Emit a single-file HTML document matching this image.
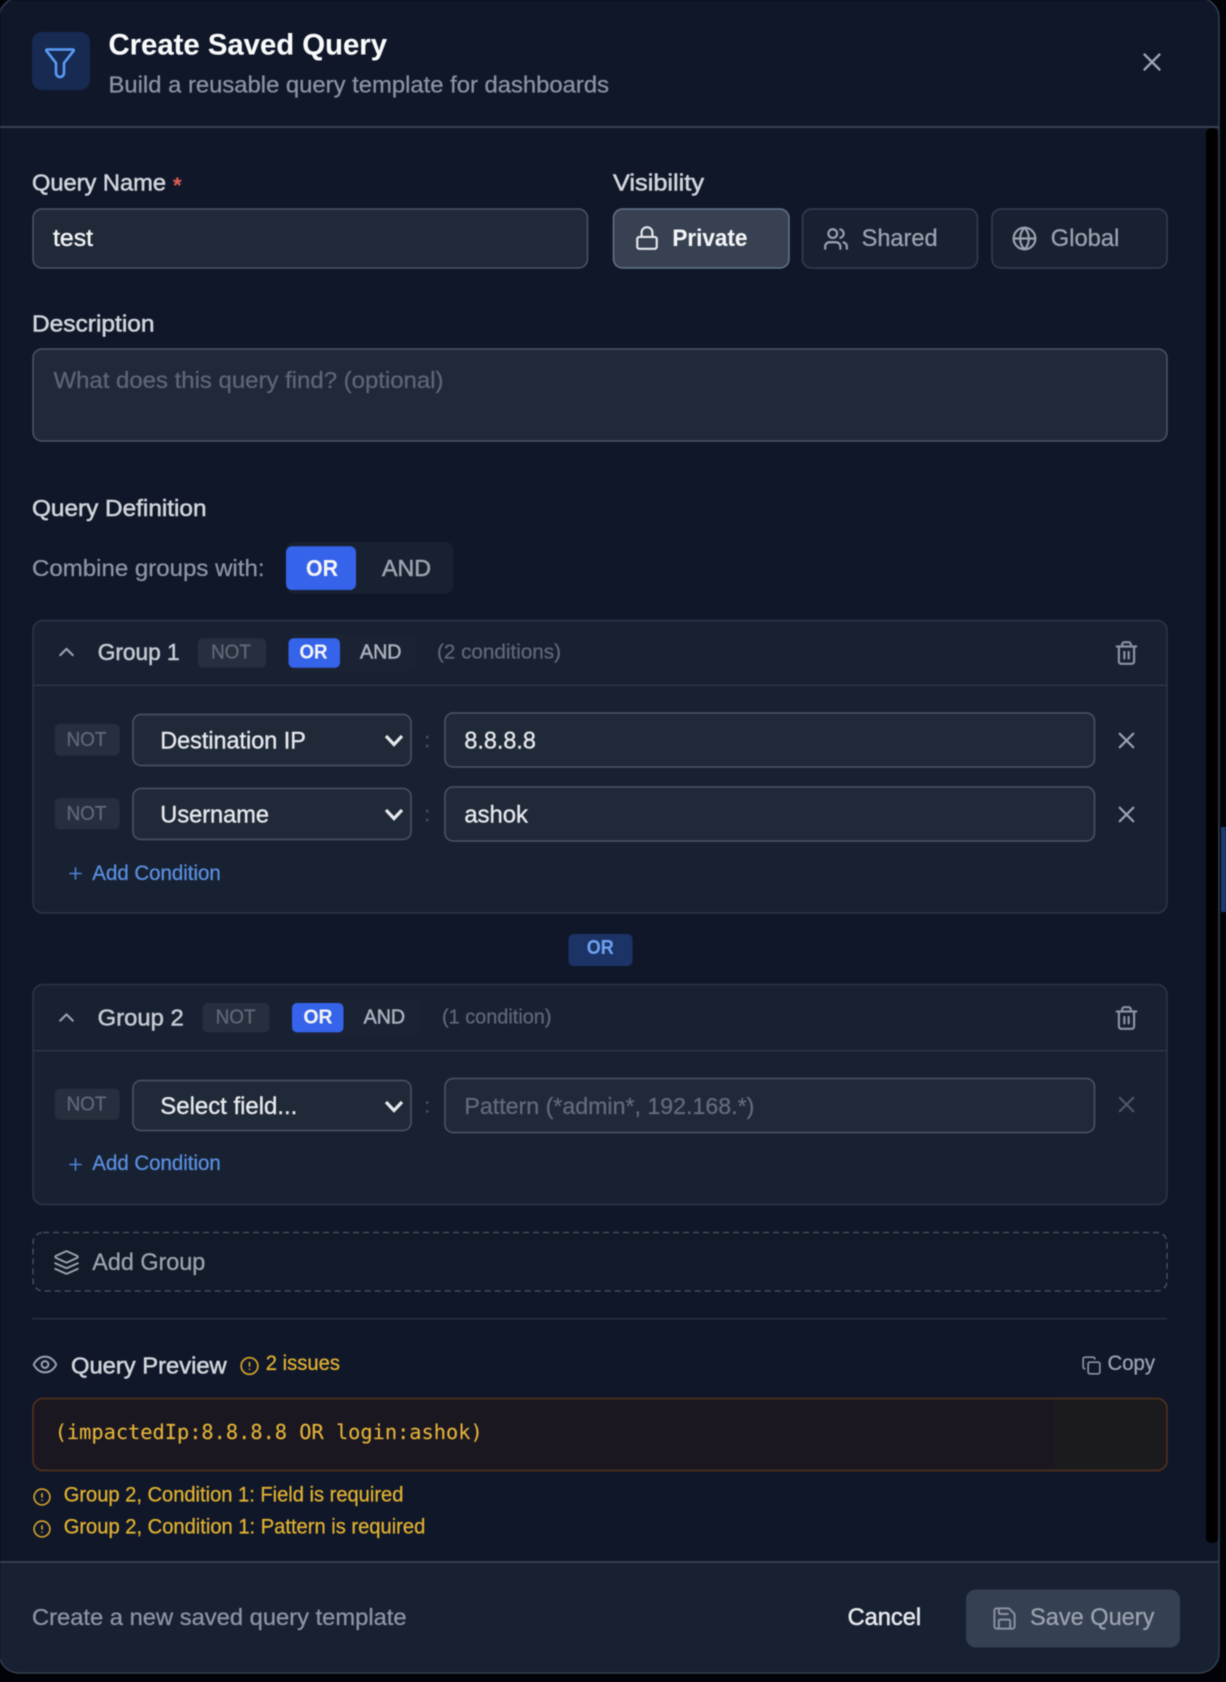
<!DOCTYPE html>
<html lang="en"><head><meta charset="utf-8"><title>Create Saved Query</title>
<style>
html,body{margin:0;padding:0;background:#020308;width:1226px;height:1682px;overflow:hidden}
svg.page{display:block;filter:blur(.6px)}
text{font-family:"Liberation Sans",sans-serif;font-size:23px;color:#9ca3af;fill:currentColor;stroke:currentColor;stroke-width:.28px}
.lab{color:#d1d5db;stroke-width:.55px;font-size:23.500px}
.med{stroke-width:.55px}
.tag{color:#5f6877;font-size:20.500px}
.b{font-weight:700;stroke-width:.1px}
.w{color:#e0b030;font-size:21px}
.add{color:#5b8fe0;font-size:21px}
.ic{fill:none;stroke-linecap:round;stroke-linejoin:round;stroke-width:2}
.val{color:#e5e7eb;font-size:24px;stroke-width:.4px}
</style></head><body>
<svg class="page" xmlns="http://www.w3.org/2000/svg" width="1226" height="1682" viewBox="0 0 1226 1682">
<defs>
<symbol id="x" viewBox="0 0 24 24"><path d="M18 6 6 18M6 6l12 12"/></symbol>
<symbol id="trash" viewBox="0 0 24 24"><path d="M3 6h18M19 6v14c0 1-1 2-2 2H7c-1 0-2-1-2-2V6M8 6V4c0-1 1-2 2-2h4c1 0 2 1 2 2v2M10 11v6M14 11v6"/></symbol>
<symbol id="up" viewBox="0 0 24 24"><path d="m18 15-6-6-6 6"/></symbol>
<symbol id="plus" viewBox="0 0 24 24"><path d="M5 12h14M12 5v14"/></symbol>
<symbol id="warn" viewBox="0 0 24 24"><circle cx="12" cy="12" r="10"/><path d="M12 8v4M12 16h.01"/></symbol>
<symbol id="lock" viewBox="0 0 24 24"><rect x="3" y="11" width="18" height="11" rx="2"/><path d="M7 11V7a5 5 0 0 1 10 0v4"/></symbol>
<symbol id="users" viewBox="0 0 24 24"><path d="M16 21v-2a4 4 0 0 0-4-4H6a4 4 0 0 0-4 4v2M22 21v-2a4 4 0 0 0-3-3.87M16 3.13a4 4 0 0 1 0 7.75"/><circle cx="9" cy="7" r="4"/></symbol>
<symbol id="globe" viewBox="0 0 24 24"><circle cx="12" cy="12" r="10"/><path d="M12 2a14.5 14.5 0 0 0 0 20 14.5 14.5 0 0 0 0-20M2 12h20"/></symbol>
<symbol id="eye" viewBox="0 0 24 24"><path d="M2 12s3-7 10-7 10 7 10 7-3 7-10 7-10-7-10-7Z"/><circle cx="12" cy="12" r="3"/></symbol>
<symbol id="layers" viewBox="0 0 24 24"><path d="m12.83 2.18a2 2 0 0 0-1.66 0L2.6 6.08a1 1 0 0 0 0 1.83l8.58 3.91a2 2 0 0 0 1.66 0l8.58-3.9a1 1 0 0 0 0-1.83ZM22 17.65l-9.17 4.16a2 2 0 0 1-1.66 0L2 17.65M22 12.65l-9.17 4.16a2 2 0 0 1-1.66 0L2 12.65"/></symbol>
<symbol id="copy" viewBox="0 0 24 24"><rect x="8" y="8" width="14" height="14" rx="2"/><path d="M4 16c-1.1 0-2-.9-2-2V4c0-1.1.9-2 2-2h10c1.1 0 2 .9 2 2"/></symbol>
<symbol id="save" viewBox="0 0 24 24"><path d="M15.2 3a2 2 0 0 1 1.4.6l3.8 3.8a2 2 0 0 1 .6 1.4V19a2 2 0 0 1-2 2H5a2 2 0 0 1-2-2V5a2 2 0 0 1 2-2zM17 21v-7a1 1 0 0 0-1-1H8a1 1 0 0 0-1 1v7M7 3v4a1 1 0 0 0 1 1h7"/></symbol>
<clipPath id="modal"><rect x="-1" y="-2" width="1220.500" height="1675" rx="20"/></clipPath>
<clipPath id="prev"><rect x="33" y="1398.500" width="1134" height="72" rx="10"/></clipPath>
</defs>

<!-- backdrop glimpses -->
<rect width="1226" height="1682" fill="#020308"/>
<rect x="1221" y="827" width="5" height="85" fill="#1c3a6e"/>

<!-- modal -->
<rect x="-1" y="-2" width="1220.500" height="1675" rx="20" fill="#101729"/>
<g clip-path="url(#modal)">
<rect x="0" y="1562" width="1220" height="112" fill="#182132"/>
<rect x="0" y="1561" width="1220" height="2" fill="#333f51"/>
<rect x="0" y="126" width="1220" height="2" fill="#394454"/>
<rect x="1206" y="128" width="12" height="1415" rx="5" fill="#000"/>
</g>
<rect x="-1" y="-2" width="1220" height="1675" rx="20" fill="none" stroke="#333f51" stroke-width="1.500"/>

<!-- header -->
<rect x="32" y="32" width="58" height="58" rx="10" fill="#172a52"/>
<path d="M47 49.500h26a.8.8 0 0 1 .6 1.300L64 63v10a4 4 0 0 1-8 0V63L46.400 50.800a.8.8 0 0 1 .6-1.300Z" fill="none" stroke="#5b9bf5" stroke-width="2.600" stroke-linejoin="round"/>
<text x="108.500" y="54.500" class="b" style="font-size:29.500px;color:#f9fafb" textLength="278.500" lengthAdjust="spacingAndGlyphs">Create Saved Query</text>
<text x="108.500" y="92.500" style="font-size:23px;color:#8b93a3" textLength="500.500" lengthAdjust="spacingAndGlyphs">Build a reusable query template for dashboards</text>
<use href="#x" x="1137" y="47" width="30" height="30" class="ic" stroke="#9ca3af" style="stroke-width:1.900"/>

<!-- name + visibility -->
<text x="32" y="190.500" class="lab" textLength="134" lengthAdjust="spacingAndGlyphs">Query Name</text>
<text x="173" y="193" style="font-size:22px;color:#e05d55" class="b">*</text>
<rect x="33" y="209" width="554.500" height="59" rx="9" fill="#1f2937" stroke="#4b5563" stroke-width="1.500"/>
<text x="53" y="246" class="val" textLength="40" lengthAdjust="spacingAndGlyphs" style="color:#f3f4f6">test</text>

<text x="613" y="190.500" class="lab" textLength="91" lengthAdjust="spacingAndGlyphs">Visibility</text>
<rect x="613.500" y="209" width="175.500" height="59" rx="9" fill="#374151" stroke="#64748b" stroke-width="1.500"/>
<use href="#lock" x="634" y="225" width="26" height="26" class="ic" stroke="#e5e7eb"/>
<text x="672.400" y="246" class="b" style="font-size:24px;color:#f3f4f6" textLength="75" lengthAdjust="spacingAndGlyphs">Private</text>
<rect x="802.500" y="209" width="175" height="59" rx="9" fill="#182132" stroke="#333f51" stroke-width="1.500"/>
<use href="#users" x="823" y="226" width="26" height="26" class="ic" stroke="#9ca3af"/>
<text x="861.600" y="246" style="font-size:24px" textLength="76" lengthAdjust="spacingAndGlyphs">Shared</text>
<rect x="992" y="209" width="175" height="59" rx="9" fill="#182132" stroke="#333f51" stroke-width="1.500"/>
<use href="#globe" x="1011.500" y="225.500" width="26" height="26" class="ic" stroke="#9ca3af"/>
<text x="1050.800" y="246" style="font-size:24px" textLength="68.500" lengthAdjust="spacingAndGlyphs">Global</text>

<!-- description -->
<text x="32" y="331.500" class="lab" textLength="122.500" lengthAdjust="spacingAndGlyphs">Description</text>
<rect x="33" y="349" width="1134" height="92" rx="9" fill="#1f2937" stroke="#4b5563" stroke-width="1.500"/>
<text x="53.500" y="388" style="font-size:23.500px;color:#5d6675" textLength="390" lengthAdjust="spacingAndGlyphs">What does this query find? (optional)</text>

<!-- definition -->
<text x="32" y="516" class="lab" textLength="174.500" lengthAdjust="spacingAndGlyphs">Query Definition</text>
<text x="32" y="576" style="font-size:23.500px;color:#8d95a3" textLength="232.500" lengthAdjust="spacingAndGlyphs">Combine groups with:</text>
<rect x="286" y="542" width="167.500" height="51.500" rx="8" fill="#182132"/>
<rect x="286" y="546.300" width="70" height="43.700" rx="6" fill="#3563e9"/>
<text x="306" y="576" class="b" style="font-size:23.500px;color:#f3f4f6" textLength="32" lengthAdjust="spacingAndGlyphs">OR</text>
<text x="382" y="576" class="med" style="font-size:23.500px" textLength="49" lengthAdjust="spacingAndGlyphs">AND</text>

<!-- group 1 -->
<rect x="33" y="620.500" width="1134" height="292.500" rx="10" fill="#182132" stroke="#2b3648" stroke-width="1.500"/>
<rect x="33.500" y="684.500" width="1133" height="1.500" fill="#2b3648"/>
<use href="#up" x="54" y="639.500" width="25" height="25" class="ic" stroke="#9ca3af"/>
<text x="97.700" y="660" class="med" style="font-size:23.500px;color:#c4c9d2" textLength="82" lengthAdjust="spacingAndGlyphs">Group 1</text>
<rect x="198" y="638.300" width="68" height="29.400" rx="5" fill="#262f3d"/>
<text x="211" y="658.500" class="tag" textLength="40" lengthAdjust="spacingAndGlyphs">NOT</text>
<rect x="288.500" y="634" width="127.500" height="37.700" rx="7" fill="#1a2233"/>
<rect x="288.500" y="638.300" width="51.500" height="29.400" rx="5" fill="#3563e9"/>
<text x="299.500" y="658.500" class="b" style="font-size:20.500px;color:#f3f4f6" textLength="28" lengthAdjust="spacingAndGlyphs">OR</text>
<text x="360" y="658.500" class="med" style="font-size:20.500px;color:#aab1bd" textLength="41.500" lengthAdjust="spacingAndGlyphs">AND</text>
<text x="437" y="658.500" class="tag" textLength="124" lengthAdjust="spacingAndGlyphs">(2 conditions)</text>
<use href="#trash" x="1113.500" y="640" width="26" height="26" class="ic" stroke="#8b93a3"/>

<rect x="54.700" y="724" width="65" height="31.500" rx="5" fill="#262f3d"/>
<text x="66.500" y="746" class="tag" textLength="40" lengthAdjust="spacingAndGlyphs">NOT</text>
<rect x="133" y="714.500" width="278" height="51" rx="8" fill="#1f2937" stroke="#4b5563" stroke-width="1.500"/>
<text x="160.300" y="748.300" class="val" textLength="145.500" lengthAdjust="spacingAndGlyphs">Destination IP</text>
<path d="M386 736l8 8.500 8-8.500" fill="none" stroke="#e5e7eb" stroke-width="3.200"/>
<text x="424.500" y="747" style="font-size:20px;color:#4b5563">:</text>
<rect x="445" y="713" width="649.500" height="54" rx="8" fill="#1f2937" stroke="#4b5563" stroke-width="1.500"/>
<text x="464.400" y="748.300" class="val" textLength="71.500" lengthAdjust="spacingAndGlyphs">8.8.8.8</text>
<use href="#x" x="1113" y="727" width="27" height="27" class="ic" stroke="#9ca3af"/>

<rect x="54.700" y="798.300" width="65" height="31" rx="5" fill="#262f3d"/>
<text x="66.500" y="820" class="tag" textLength="40" lengthAdjust="spacingAndGlyphs">NOT</text>
<rect x="133" y="788.500" width="278" height="51" rx="8" fill="#1f2937" stroke="#4b5563" stroke-width="1.500"/>
<text x="160.300" y="822.300" class="val" textLength="108.700" lengthAdjust="spacingAndGlyphs">Username</text>
<path d="M386 810l8 8.500 8-8.500" fill="none" stroke="#e5e7eb" stroke-width="3.200"/>
<text x="424.500" y="821" style="font-size:20px;color:#4b5563">:</text>
<rect x="445" y="787" width="649.500" height="54" rx="8" fill="#1f2937" stroke="#4b5563" stroke-width="1.500"/>
<text x="464.400" y="822.300" class="val" textLength="63.500" lengthAdjust="spacingAndGlyphs">ashok</text>
<use href="#x" x="1113" y="801" width="27" height="27" class="ic" stroke="#9ca3af"/>

<use href="#plus" x="66" y="864" width="19" height="19" class="ic" stroke="#4f82d8"/>
<text x="92.300" y="880" class="add" textLength="128.500" lengthAdjust="spacingAndGlyphs">Add Condition</text>

<!-- OR pill -->
<rect x="568.500" y="934" width="64" height="32" rx="5" fill="#1c3366"/>
<text x="586.700" y="954" class="b" style="font-size:20.500px;color:#6ea0f0" textLength="27" lengthAdjust="spacingAndGlyphs">OR</text>

<!-- group 2 -->
<rect x="33" y="984.500" width="1134" height="220" rx="10" fill="#182132" stroke="#2b3648" stroke-width="1.500"/>
<rect x="33.500" y="1050" width="1133" height="1.500" fill="#2b3648"/>
<use href="#up" x="54" y="1005" width="25" height="25" class="ic" stroke="#9ca3af"/>
<text x="97.700" y="1025.500" class="med" style="font-size:23.500px;color:#c4c9d2" textLength="86" lengthAdjust="spacingAndGlyphs">Group 2</text>
<rect x="202.700" y="1003" width="67" height="29.400" rx="5" fill="#262f3d"/>
<text x="215.600" y="1023.500" class="tag" textLength="40" lengthAdjust="spacingAndGlyphs">NOT</text>
<rect x="292" y="998.800" width="128" height="37.700" rx="7" fill="#1a2233"/>
<rect x="292" y="1003" width="51.500" height="29.400" rx="5" fill="#3563e9"/>
<text x="303.500" y="1023.500" class="b" style="font-size:20.500px;color:#f3f4f6" textLength="29" lengthAdjust="spacingAndGlyphs">OR</text>
<text x="363.600" y="1023.500" class="med" style="font-size:20.500px;color:#aab1bd" textLength="41.500" lengthAdjust="spacingAndGlyphs">AND</text>
<text x="442" y="1023.500" class="tag" textLength="109.500" lengthAdjust="spacingAndGlyphs">(1 condition)</text>
<use href="#trash" x="1113.500" y="1005" width="26" height="26" class="ic" stroke="#8b93a3"/>

<rect x="54.700" y="1088.700" width="65" height="31" rx="5" fill="#262f3d"/>
<text x="66.500" y="1110.500" class="tag" textLength="40" lengthAdjust="spacingAndGlyphs">NOT</text>
<rect x="133" y="1080.500" width="278" height="50" rx="8" fill="#1f2937" stroke="#4b5563" stroke-width="1.500"/>
<text x="160.300" y="1114" class="val" textLength="137" lengthAdjust="spacingAndGlyphs">Select field...</text>
<path d="M386 1102l8 8.500 8-8.500" fill="none" stroke="#e5e7eb" stroke-width="3.200"/>
<text x="424.500" y="1112.500" style="font-size:20px;color:#4b5563">:</text>
<rect x="445" y="1078.500" width="649.500" height="54" rx="8" fill="#1f2937" stroke="#4b5563" stroke-width="1.500"/>
<text x="464.400" y="1114" style="font-size:23.500px;color:#626b7a" textLength="290" lengthAdjust="spacingAndGlyphs">Pattern (*admin*, 192.168.*)</text>
<use href="#x" x="1113" y="1091" width="27" height="27" class="ic" stroke="#4b5563"/>

<use href="#plus" x="66" y="1155" width="19" height="19" class="ic" stroke="#4f82d8"/>
<text x="92.300" y="1170" class="add" textLength="128.500" lengthAdjust="spacingAndGlyphs">Add Condition</text>

<!-- add group -->
<rect x="33" y="1232.500" width="1134" height="58.500" rx="10" fill="#111a28" stroke="#4b5563" stroke-width="1.300" stroke-dasharray="6 4"/>
<use href="#layers" x="53" y="1249" width="27" height="27" class="ic" stroke="#9ca3af" style="stroke-width:1.700"/>
<text x="92.300" y="1270" style="font-size:24px" textLength="113" lengthAdjust="spacingAndGlyphs">Add Group</text>
<rect x="32" y="1318" width="1135" height="1.500" fill="#263041"/>

<!-- preview -->
<use href="#eye" x="31.500" y="1351" width="27" height="27" class="ic" stroke="#9ca3af" style="stroke-width:1.700"/>
<text x="71" y="1373.500" class="lab" textLength="155.700" lengthAdjust="spacingAndGlyphs">Query Preview</text>
<use href="#warn" x="239.500" y="1356" width="20" height="20" class="ic" stroke="#d6a52a"/>
<text x="265.800" y="1370" class="w" textLength="74.200" lengthAdjust="spacingAndGlyphs">2 issues</text>
<use href="#copy" x="1081.500" y="1355.500" width="20" height="20" class="ic" stroke="#8b93a3"/>
<text x="1107.500" y="1370" style="font-size:21px" textLength="47.500" lengthAdjust="spacingAndGlyphs">Copy</text>
<rect x="33" y="1398.500" width="1134" height="72" rx="10" fill="#1a1720"/>
<rect x="1055" y="1398" width="113" height="73" fill="#1b1b1d" clip-path="url(#prev)"/>
<rect x="33" y="1398.500" width="1134" height="72" rx="10" fill="none" stroke="#58331a" stroke-width="1.500"/>
<text x="54.700" y="1439" style="font-family:'DejaVu Sans Mono',monospace;font-size:20.400px;color:#e2b23a;stroke-width:.15px" textLength="428" lengthAdjust="spacingAndGlyphs">(impactedIp:8.8.8.8 OR login:ashok)</text>
<use href="#warn" x="32.500" y="1487.500" width="19" height="19" class="ic" stroke="#d6a52a"/>
<text x="63.700" y="1501.700" class="w" textLength="339.700" lengthAdjust="spacingAndGlyphs">Group 2, Condition 1: Field is required</text>
<use href="#warn" x="32.500" y="1519.500" width="19" height="19" class="ic" stroke="#d6a52a"/>
<text x="63.700" y="1533.300" class="w" textLength="361.600" lengthAdjust="spacingAndGlyphs">Group 2, Condition 1: Pattern is required</text>

<!-- footer -->
<text x="32" y="1625" style="font-size:23.500px;color:#8d95a3" textLength="374.600" lengthAdjust="spacingAndGlyphs">Create a new saved query template</text>
<text x="847.600" y="1625" class="med" style="font-size:24px;color:#e5e7eb" textLength="73.500" lengthAdjust="spacingAndGlyphs">Cancel</text>
<rect x="966" y="1589.500" width="214" height="58" rx="10" fill="#354052"/>
<use href="#save" x="991" y="1605" width="27" height="27" class="ic" stroke="#8b93a3" style="stroke-width:1.700"/>
<text x="1030" y="1625" style="font-size:24px" textLength="124.400" lengthAdjust="spacingAndGlyphs">Save Query</text>
</svg>
</body></html>
